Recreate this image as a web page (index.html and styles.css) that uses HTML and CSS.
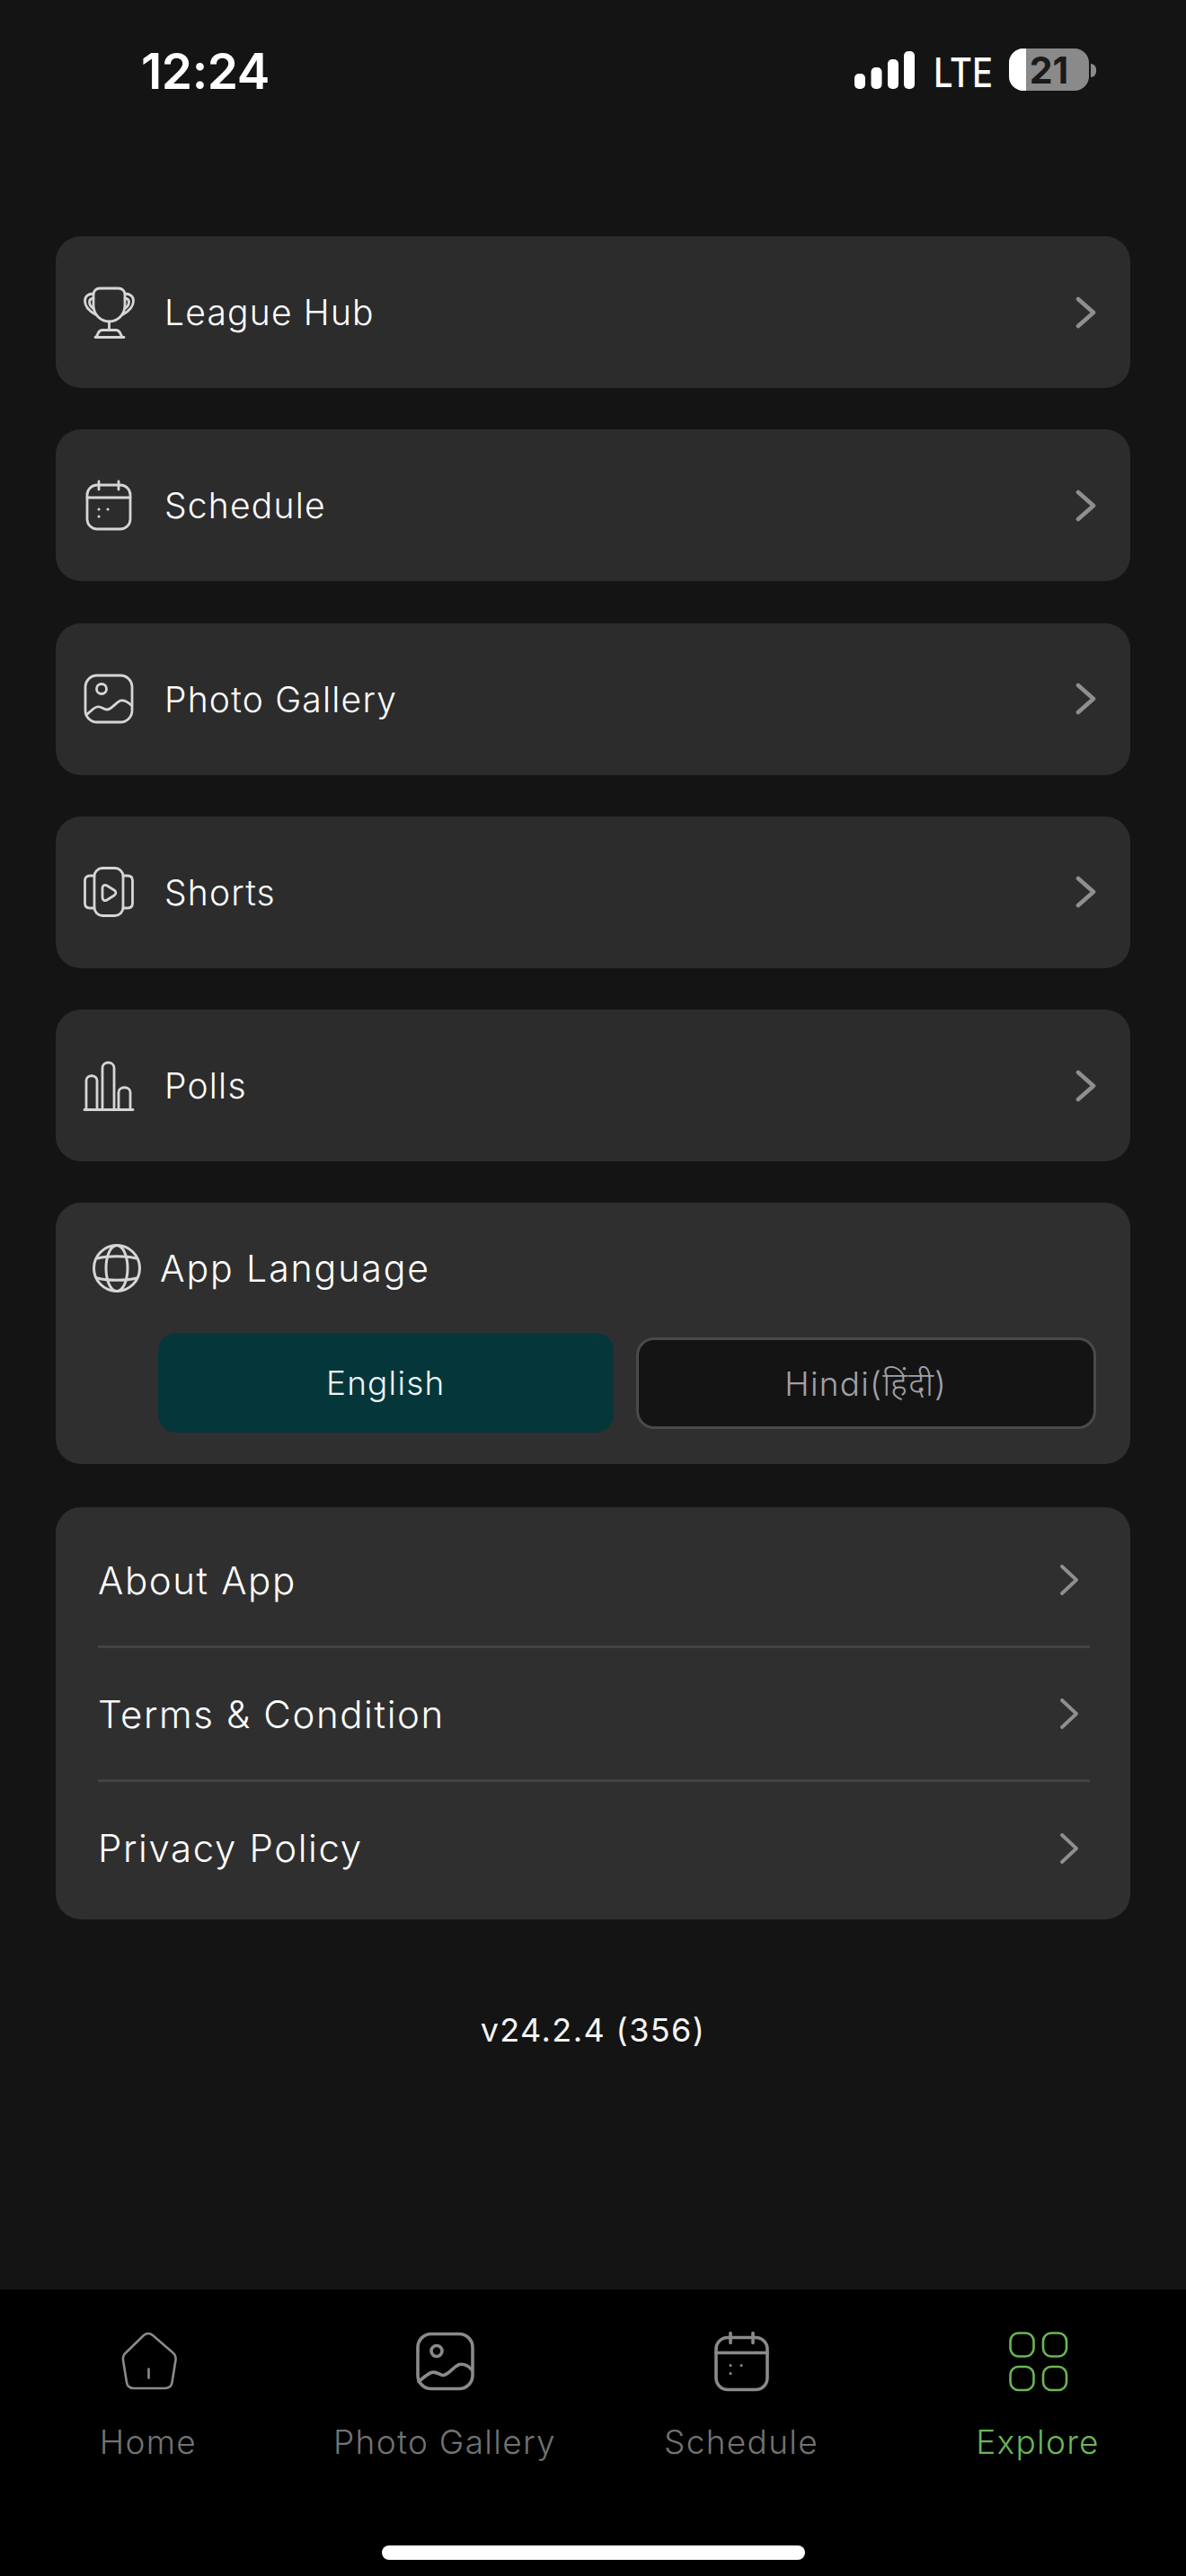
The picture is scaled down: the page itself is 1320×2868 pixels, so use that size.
FILE: index.html
```html
<!DOCTYPE html>
<html lang="en">
<head>
    <meta charset="UTF-8">
    <meta name="viewport" content="width=device-width, initial-scale=1.0">
    <title>Explore</title>
    <link rel="stylesheet" href="styles.css">
</head>
<body>
    <div class="screen">
        <header class="status-bar">
            <span class="clock">12:24</span>
            <div class="status-right">
                <svg class="signal" width="67" height="43" viewBox="0 0 67 43">
                    <rect x="0" y="25" width="12" height="17" rx="5"/>
                    <rect x="18.500" y="18" width="12" height="24" rx="5"/>
                    <rect x="37" y="9" width="12" height="33" rx="5"/>
                    <rect x="55" y="0" width="12" height="42" rx="5"/>
                </svg>
                <span class="lte">LTE</span>
                <div class="battery">
                    <div class="battery-fill"></div>
                    <span class="battery-text">21</span>
                </div>
                <span class="battery-nub"></span>
            </div>
        </header>

        <main class="content">
            <a class="menu-card">
                <svg class="menu-icon" viewBox="0 0 56 56">
                    <path d="M18 1h21c4 0 7 3 7 7v12c0 10-8 18-17.500 18S11 30 11 20V8c0-4 3-7 7-7z"/>
                    <path d="M11 7C5 7 1.500 10 1.500 15c0 6 4.500 11 11.500 15M11 12c-3 .5-4.500 2-4.500 4 0 3 1.500 5.500 4.500 7.500M46 7c6 0 9.500 3 9.500 8 0 6-4.500 11-11.500 15M46 12c3 .5 4.500 2 4.500 4 0 3-1.500 5.500-4.500 7.500"/>
                    <path d="M28.500 38v9M14 55.500l2.500-5c1-2 2.500-3 4.500-3h15c2 0 3.500 1 4.500 3l2.500 5zM13 55.500h32"/>
                </svg>
                <span class="menu-label">League Hub</span>
                <svg class="chevron" viewBox="0 0 24 36"><path d="M4 3l17 15L4 33"/></svg>
            </a>
            <a class="menu-card">
                <svg class="menu-icon" viewBox="0 0 56 56">
                    <rect x="4" y="5" width="48" height="49" rx="11"/>
                    <path d="M4 19h48M17 1v9M39 1v9"/>
                    <path class="dots" d="M17 32h.1M27 32h.1M17 40h.1"/>
                </svg>
                <span class="menu-label">Schedule</span>
                <svg class="chevron" viewBox="0 0 24 36"><path d="M4 3l17 15L4 33"/></svg>
            </a>
            <a class="menu-card">
                <svg class="menu-icon" viewBox="0 0 56 56">
                    <rect x="2" y="2" width="52" height="52" rx="13"/>
                    <circle cx="20" cy="17" r="5.500"/>
                    <path d="M3 46c4-3 8-8 12-9 5-1 7 3 11 3 5 0 9-7 15-10 5-1 9 2 12 5"/>
                </svg>
                <span class="menu-label">Photo Gallery</span>
                <svg class="chevron" viewBox="0 0 24 36"><path d="M4 3l17 15L4 33"/></svg>
            </a>
            <a class="menu-card">
                <svg class="menu-icon" viewBox="0 0 56 56">
                    <rect x="12" y="1.500" width="32" height="53" rx="9"/>
                    <path d="M12 10H7c-3.500 0-5.500 2-5.500 5.500v25C1.500 44 3.500 46 7 46h5M44 10h5c3.500 0 5.500 2 5.500 5.500v25c0 3.500-2 5.500-5.500 5.500h-5"/>
                    <path d="M21 24c0-3 2.500-4.500 5-3l8 5c2.500 1.500 2.500 4.500 0 6l-8 5c-2.500 1.500-5 0-5-3z"/>
                </svg>
                <span class="menu-label">Shorts</span>
                <svg class="chevron" viewBox="0 0 24 36"><path d="M4 3l17 15L4 33"/></svg>
            </a>
            <a class="menu-card">
                <svg class="menu-icon" viewBox="0 0 56 56">
                    <path d="M1 54.500h54"/>
                    <path d="M3 54V22c0-7 12-7 12 0v32M21 54V8c0-8 13-8 13 0v46M39 54V35c0-7 13-7 13 0v19"/>
                </svg>
                <span class="menu-label">Polls</span>
                <svg class="chevron" viewBox="0 0 24 36"><path d="M4 3l17 15L4 33"/></svg>
            </a>

            <section class="language-card">
                <div class="language-head">
                    <svg class="globe-icon" viewBox="0 0 54 54">
                        <circle cx="27" cy="27" r="25.500"/>
                        <ellipse cx="27" cy="27" rx="12" ry="25.500"/>
                        <path d="M5 16c12-3 32-3 44 0M5 38c12 3 32 3 44 0"/>
                    </svg>
                    <span class="language-title">App Language</span>
                </div>
                <div class="language-options">
                    <div class="lang-btn lang-active">English</div>
                    <div class="lang-btn lang-idle">Hindi(हिंदी)</div>
                </div>
            </section>

            <section class="links-card">
                <a class="link-row">
                    <span>About App</span>
                    <svg class="chevron-sm" viewBox="0 0 22 34"><path d="M3 2l16 15L3 32"/></svg>
                </a>
                <a class="link-row">
                    <span>Terms &amp; Condition</span>
                    <svg class="chevron-sm" viewBox="0 0 22 34"><path d="M3 2l16 15L3 32"/></svg>
                </a>
                <a class="link-row">
                    <span>Privacy Policy</span>
                    <svg class="chevron-sm" viewBox="0 0 22 34"><path d="M3 2l16 15L3 32"/></svg>
                </a>
            </section>

            <p class="version">v24.2.4 (356)</p>
        </main>

        <nav class="tab-bar">
            <div class="tabs">
                <a class="tab">
                    <svg class="tab-icon" viewBox="0 0 65 65">
                        <path class="thin" d="M27 3.500c3-2.500 7-2.500 10 0l22 19c3 2.500 4 5 3.500 8.500l-4 25c-.6 4-3.500 6.500-8 6.500H16c-4.500 0-7.400-2.500-8-6.500l-4-25C3.500 27.500 4.500 25 7.500 22.500zM32.500 41v10"/>
                    </svg>
                    <span>Home</span>
                </a>
                <a class="tab">
                    <svg class="tab-icon" viewBox="0 0 65 65">
                        <rect x="2" y="2" width="61" height="61" rx="15"/>
                        <circle cx="23" cy="21" r="6"/>
                        <path d="M3 55c5-4 9-8 14-10 6-2 9 3 13 3 6 0 11-9 18-12 6-1 11 2 14 6"/>
                    </svg>
                    <span>Photo Gallery</span>
                </a>
                <a class="tab">
                    <svg class="tab-icon" viewBox="0 0 65 65">
                        <rect x="4" y="6" width="57" height="58" rx="13"/>
                        <path d="M4 23h57M20 1v11M45 1v11"/>
                        <path class="dots" d="M20 37h.1M32 37h.1M20 46h.1"/>
                    </svg>
                    <span>Schedule</span>
                </a>
                <a class="tab tab-active">
                    <svg class="tab-icon" viewBox="0 0 65 65">
                        <rect class="thin" x="1.500" y="1" width="26" height="26" rx="9"/>
                        <rect class="thin" x="38" y="1" width="26" height="26" rx="9"/>
                        <rect class="thin" x="1.500" y="38.500" width="26" height="26" rx="9"/>
                        <rect class="thin" x="38" y="38.500" width="26" height="26" rx="9"/>
                    </svg>
                    <span>Explore</span>
                </a>
            </div>
            <div class="home-indicator"></div>
        </nav>
    </div>
</body>
</html>
```

FILE: styles.css
```css
* {
    box-sizing: border-box;
}

body {
    margin: 0;
    background: #141414;
    font-family: Inter, "Noto Sans", "Noto Sans Devanagari", sans-serif;
    font-weight: 300;
    color: #fff;
}

svg {
    fill: none;
    stroke-linecap: round;
    stroke-linejoin: round;
}

.screen {
    width: 1320px;
    height: 2868px;
    display: flex;
    flex-direction: column;
    overflow: hidden;
}

/* status bar */
.status-bar {
    height: 263px;
    flex-shrink: 0;
    display: flex;
    justify-content: space-between;
    align-items: flex-start;
    padding: 49px 100px 0 157px;
}

.clock {
    font-size: 55px;
    line-height: 60px;
    font-weight: 600;
    letter-spacing: -0.4px;
}

.status-right {
    display: flex;
    align-items: flex-start;
    padding-top: 5px;
}

.signal {
    margin: 3px 21px 0 -5px;
}

.signal rect {
    fill: #fff;
}

.lte {
    font-size: 45px;
    line-height: 44px;
    font-weight: 500;
    transform: scaleX(0.85);
    transform-origin: left;
    width: 84px;
    padding-top: 5px;
}

.battery {
    position: relative;
    width: 89px;
    height: 47px;
    border-radius: 16px;
    background: #8a8a8a;
    overflow: hidden;
    display: flex;
    justify-content: center;
    align-items: center;
}

.battery-fill {
    position: absolute;
    left: 0;
    top: 0;
    bottom: 0;
    width: 19px;
    background: #fff;
}

.battery-text {
    position: relative;
    font-size: 41px;
    font-weight: 700;
    color: #1a1a1a;
}

.battery-nub {
    width: 6px;
    height: 15px;
    margin: 17px 0 0 2px;
    border-radius: 0 8px 8px 0;
    background: #8a8a8a;
}

/* list */
.content {
    flex: 1;
    padding: 0 62px;
    display: flex;
    flex-direction: column;
}

.menu-card {
    height: 169px;
    margin-bottom: 46.25px;
    padding: 0 38px 0 31px;
    display: flex;
    align-items: center;
    background: #2c2c2c;
    border-radius: 28px;
}

.menu-icon {
    width: 56px;
    height: 56px;
    flex-shrink: 0;
    stroke: #d6d6d6;
    stroke-width: 2.8;
    overflow: visible;
}

.dots {
    stroke-width: 3;
}

.menu-label {
    flex: 1;
    margin-left: 34px;
    font-size: 39px;
    letter-spacing: 1.2px;
    color: #fff;
}

.chevron {
    width: 24px;
    height: 36px;
    stroke: #8f8f8f;
    stroke-width: 4.6;
}

.language-card {
    height: 291px;
    margin-bottom: 48px;
    padding: 46px 38px 0 41px;
    background: #2f2f2f;
    border-radius: 28px;
}

.language-head {
    display: flex;
    align-items: center;
    height: 54px;
}

.globe-icon {
    width: 54px;
    height: 54px;
    stroke: #d6d6d6;
    stroke-width: 3;
}

.language-title {
    margin-left: 21px;
    font-size: 41px;
    letter-spacing: 1.9px;
}

.language-options {
    display: flex;
    align-items: center;
    gap: 25px;
    margin: 45px 0 0 73px;
}

.lang-btn {
    flex: 1;
    display: flex;
    align-items: center;
    justify-content: center;
    font-size: 37px;
    letter-spacing: 1.2px;
    border-radius: 20px;
}

.lang-active {
    height: 111px;
    background: #05363a;
    color: #eef5f5;
}

.lang-idle {
    height: 102px;
    background: #141414;
    border: 3px solid #4a4a4a;
    color: #a0a0aa;
}

.links-card {
    height: 459px;
    padding: 0 45px 0 47px;
    background: #2f2f2f;
    border-radius: 28px;
}

.link-row {
    height: 149px;
    display: flex;
    align-items: center;
    justify-content: space-between;
    padding-right: 12px;
    border-bottom: 3px solid #434343;
    font-size: 42px;
    letter-spacing: 1.6px;
}

.link-row:first-child {
    height: 157px;
    padding-top: 8px;
}

.link-row:last-child {
    height: 153px;
    padding-bottom: 6px;
    border-bottom: none;
}

.chevron-sm {
    width: 22px;
    height: 34px;
    stroke: #8f8f8f;
    stroke-width: 3.8;
}

.version {
    margin: 102px 0 0;
    text-align: center;
    font-size: 36px;
    font-weight: 400;
    letter-spacing: 1.4px;
    line-height: 42px;
    color: #f5f5f5;
}

/* tab bar */
.tab-bar {
    height: 319px;
    flex-shrink: 0;
    background: #000;
    display: flex;
    flex-direction: column;
    align-items: center;
}

.tabs {
    display: grid;
    grid-template-columns: repeat(4, 330px);
    padding-top: 47px;
}

.tab {
    display: flex;
    flex-direction: column;
    align-items: center;
    font-size: 37px;
    letter-spacing: 1.3px;
    line-height: 44px;
    color: #727272;
}

.tab-icon {
    width: 65px;
    height: 66px;
    margin-bottom: 35px;
    stroke: #8a8a8a;
    stroke-width: 3.6;
    overflow: visible;
}

.thin {
    stroke-width: 2.6;
}

.tab-active {
    color: #6bb557;
}

.tab-active .tab-icon {
    stroke: #6bb557;
}

.home-indicator {
    width: 471px;
    height: 16px;
    margin-top: 93px;
    background: #fff;
    border-radius: 8px;
}
```
